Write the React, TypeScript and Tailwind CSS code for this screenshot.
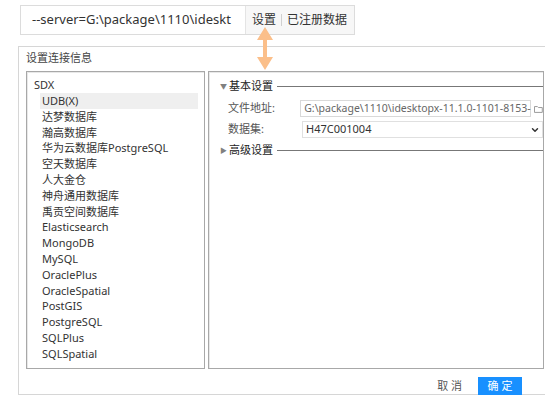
import { ChevronDown } from "lucide-react";

const font = { fontFamily: '"Noto Sans", "Noto Sans CJK SC", sans-serif' };

const items = [
  "UDB(X)",
  "达梦数据库",
  "瀚高数据库",
  "华为云数据库PostgreSQL",
  "空天数据库",
  "人大金仓",
  "神舟通用数据库",
  "禹贡空间数据库",
  "Elasticsearch",
  "MongoDB",
  "MySQL",
  "OraclePlus",
  "OracleSpatial",
  "PostGIS",
  "PostgreSQL",
  "SQLPlus",
  "SQLSpatial",
];

function Section({ open, title }: { open: boolean; title: string }) {
  return (
    <div className="flex h-[18px] items-center">
      <span className="w-[8px] text-[7px] leading-none text-[#808080]">{open ? "▼" : "▶"}</span>
      <span className="ml-[1px] text-[11px] text-[#222]">{title}</span>
      <div className="ml-[4px] h-px flex-1 bg-[#777]" />
    </div>
  );
}

export default function App() {
  return (
    <div className="relative h-[396px] w-[545px] overflow-hidden bg-white" style={font}>
      {/* top bar */}
      <div className="ml-[20px] mt-[5px] flex h-[30px] w-[335px] border border-[#dcdcdc] text-[#333]">
        <div className="flex w-[224px] items-center whitespace-nowrap pl-[11px] text-[13px]">
          --server=G:\package\1110\ideskt
        </div>
        <div className="flex flex-1 items-center whitespace-nowrap border-l border-[#e4e4e4] bg-[#f7f7f7] pl-[6px] text-[12px]">
          <span>设置</span>
          <span className="mx-[5px] h-[12px] w-px bg-[#d0d0d0]" />
          <span>已注册数据</span>
        </div>
      </div>

      {/* dialog */}
      <div className="ml-[18px] mt-[11px] h-[349px] w-[540px] border border-[#d6d6d6] bg-white">
        <div className="pl-[7px] pt-[3px] text-[11px] leading-[16px] text-[#444]">设置连接信息</div>
        <div className="ml-[7px] mt-[5px] flex h-[298px] gap-[3px]">
          <div className="w-[179px] border border-[#a8a8a8] pt-[5px] text-[11px] text-[#333] shadow-[inset_1px_1px_0_#e8e8e8]">
            <div className="pl-[7px] leading-[16px]">SDX</div>
            {items.map((it, i) => (
              <div
                key={it}
                className={`ml-[13px] mr-[6px] pl-[2px] leading-[15.8px] ${i === 0 ? "bg-[#efefef]" : ""}`}
              >
                {it}
              </div>
            ))}
          </div>
          <div className="w-[336px] border border-[#a8a8a8] pl-[11px] pt-[5px] text-[11px] shadow-[inset_1px_1px_0_#e8e8e8]">
            <Section open title="基本设置" />
            <div className="mt-[5px] flex h-[17px] items-center">
              <span className="w-[82px] pl-[8px] text-[#555]">文件地址:</span>
              <div className="flex h-[17px] w-[231px] items-center whitespace-nowrap border border-[#d9d9d9] pl-[3px] text-[10.5px] text-[#666]">
                G:\package\1110\idesktopx-11.1.0-1101-8153-
              </div>
              <svg width="9" height="8" viewBox="0 0 9 8" className="ml-[3px]">
                <path d="M0.5 1.5h3l1 1h4v5h-8z" fill="none" stroke="#999" />
              </svg>
            </div>
            <div className="mt-[4px] flex h-[17px] items-center">
              <span className="w-[82px] pl-[8px] text-[#555]">数据集:</span>
              <div className="flex h-[17px] flex-1 items-center justify-between border border-[#e0e0e0] pl-[3px] pr-[2px] text-[#333]">
                <span>H47C001004</span>
                <ChevronDown size={10} strokeWidth={3.5} className="text-[#333]" />
              </div>
            </div>
            <div className="mt-[3px]">
              <Section open={false} title="高级设置" />
            </div>
          </div>
        </div>
        <div className="mt-[8px] flex items-center justify-end pr-[35px]">
          <span className="mr-[16px] text-[11px] text-[#555]">取 消</span>
          <div className="flex h-[18px] w-[44px] items-center justify-center bg-[#1890ff] text-[11px] text-white">
            确 定
          </div>
        </div>
      </div>

      {/* arrow */}
      <svg width="18" height="44" viewBox="0 0 18 44" className="absolute left-[256px] top-[27px]">
        <polygon
          points="9,0 17,13 11,13 11,30 17,30 9,43 1,30 7,30 7,13 1,13"
          fill="#fbbf8a"
        />
      </svg>
    </div>
  );
}
